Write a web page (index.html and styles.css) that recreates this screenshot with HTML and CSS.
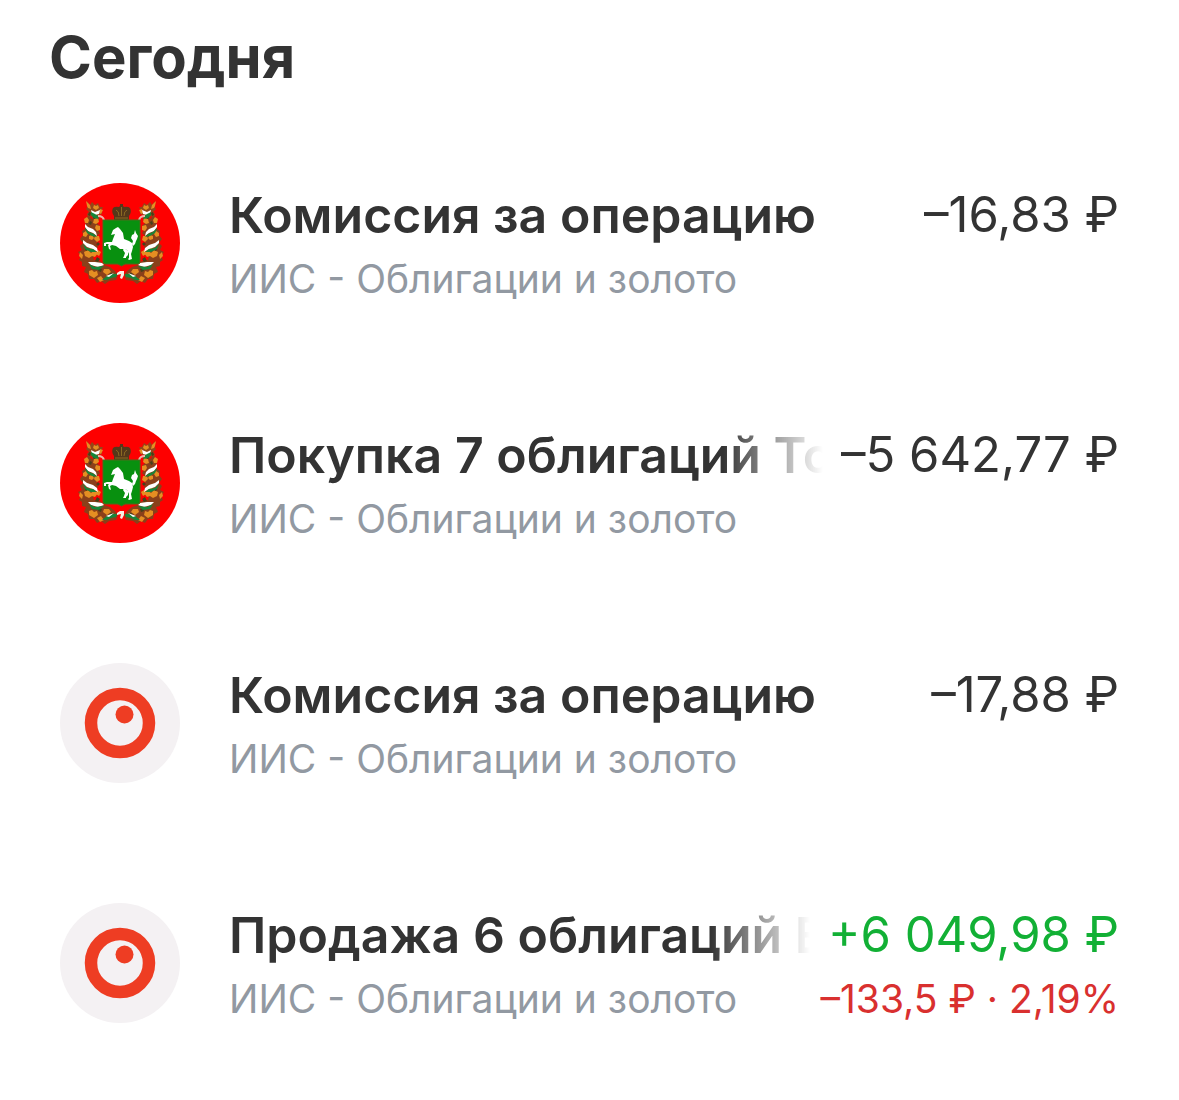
FILE: index.html
```html
<!DOCTYPE html>
<html lang="ru">
<head>
<title>Операции</title>
<meta charset="UTF-8">
<meta name="viewport" content="width=device-width, initial-scale=1.0">
<link rel="stylesheet" href="styles.css">
</head>

<body>

<!-- shared logos -->
<svg class="sprite" aria-hidden="true">
  <symbol id="tomsk" viewBox="0 0 120 120">
    <circle cx="60" cy="60" r="60" fill="#fe0000"/>
    <!-- left half of the wreath, mirrored below for the right half -->
    <g id="wreath">
      <path d="M27 18l3 4 2-3 3 3 3-2 2 4 3 0-2 4 1 3-4 1-1 4-4 0-2-3-3 2-1-4 2-2-3-3 2-3z" fill="#94461a"/>
      <path d="M26 35l3-2 3 3 4-2 3 3-2 3 3 3-2 4 2 3-3 3 2 4-3 3 2 4-3 4 2 4-4 2 1 3 6 1 4 4 6 2 5 4 3 4-2 5-7 1-4 3-4-3-4 2-3-4-5 0-1-5-4-2 2-5-4-1 0-4-3-2 2-4-3-4 4-2-2-4 3-3-3-4 3-4-1-4 3-2z" fill="#8a401a"/>
      <g fill="#e58e22">
        <path d="M26 18l4 4 1 4-3-1-1-2z"/>
        <path d="M34 22l2 1 2-1 1 3-3 2-3-2z"/>
        <path d="M40 26l3 1-2 4-2-1z"/>
        <path d="M24 36l3-2 2 3-1 3-3 0z"/>
        <path d="M34 36l4-1 1 4-3 2-3-1z"/>
        <path d="M23 50l3-2 2 3-2 3-3-1z"/>
        <path d="M36 42l4 1 0 4-3 1-2-3z"/>
        <path d="M29 53l3-1 2 3-2 2-3-1z"/>
        <path d="M35 53l4 0 1 4-3 2-3-3z"/>
        <path d="M24 69l4-2 3 3 4-3 3 3-3 4-3-1-3 2-4-2z"/>
        <path d="M20 69l3 3-1 4-3-3z"/>
        <path d="M29 64l4-1 1 3-3 2z"/>
        <path d="M38 67l3 2-2 4-3-2z"/>
        <path d="M29 88l3-1 2 2 3-1 1 4-4 3-5-3z"/>
        <path d="M44 86l5 0 2 3-4 3-4-3z"/>
        <path d="M37 95l4-2 3 4-4 2z"/>
      </g>
      <g fill="#45401a">
        <path d="M33 33l3 0-1 3-2-1z"/>
        <path d="M29 29l2 1-1 3-2-1z"/>
        <path d="M30 38l2 1-1 3-2-1z"/>
        <path d="M38 59l2 2-2 2-2-2z"/>
        <path d="M26 65l2 1-1 2-2-1z"/>
        <path d="M37 74l3 2-2 3-3-1z"/>
        <path d="M39 85l3 1-1 3-3-1z"/>
        <path d="M50 90l3 0-1 3-3 0z"/>
      </g>
      <!-- ribbon turns -->
      <path d="M31 27l4 2 5-2-1 4-4 1-3-1z" fill="#fff"/>
      <path d="M31 29l4 2 3 2 1 3-5-1-3-3z" fill="#16863a"/>
      <path d="M25 41l3 3 5 2 3 3 1 4-4-3-5-2-3-4z" fill="#fff"/>
      <path d="M25 45l4 4 5 2 3 3-5-1-5-3z" fill="#16863a"/>
      <path d="M23 57l4 3 6 2 4 3 1 4-5-3-6-2-4-4z" fill="#fff"/>
      <path d="M23 61l4 4 6 1 4 3-6 0-6-3z" fill="#16863a"/>
      <path d="M28 79l7 0 7 1 2 2-6 2-7-2z" fill="#fff"/>
      <path d="M29 81l6 3 9-1-5 4-7-1z" fill="#16863a"/>
      <path d="M42 97l5-4 6-2 4 0-1 3-5 1-4 2z" fill="#16863a"/>
      <path d="M46 93l8-3-5 4z" fill="#fff"/>
    </g>
    <use href="#wreath" transform="translate(122 0) scale(-1 1)"/>
    <!-- crown -->
    <path d="M53 25q2-2 6-1l1-1 0-2h3l0 2 1 1q4-1 6 1 2 4-1 8v4H54v-4q-3-4-1-8z" fill="#54381a"/>
    <path d="M56 27q3 1 3 6M67 27q-3 1-3 6M61.500 24v9M55 35h13" fill="none" stroke="#8a6a22"/>
    <path d="M44 37q-1-4-6-4M79 37q1-4 6-4" fill="none" stroke="#f0b5ab" stroke-width="2"/>
    <!-- shield -->
    <path d="M43 37h37v42q0 2-2 2H65l-3.500 2-3.500-2H45q-2 0-2-2z" fill="#08900f" stroke="#4b6c1c"/>
    <!-- horse -->
    <path d="M58 44l2 2 3 4 1 6 5 2 3 2 1 4-1 4-1 3 1 5-3 1-1-1 1-1 0-4-2-4-3-1-4 0-4-3-4-1-2 1 1 4-2-1-1-4 1-1-3 0 0 2-2 0 0-3 3-1 5 0 1-3 2-5-4 1 2-5 3-2z" fill="#fff"/>
    <path d="M64 65l4 3 0 4-2 2 0 1-3 0 1-2 1-3-2-3z" fill="#fff"/>
    <path d="M72 61l1-3-2-3 1-3 2-1 1-4 1 3 2 3-1 3-1 2-1 3-2 2z" fill="#fff"/>
    <!-- ribbon knot -->
    <path d="M57 90l3-2 4 0 0 4-2 4-2-1 1-4-4 1z" fill="#f6f1e5"/>
  </symbol>
  <symbol id="ring" viewBox="0 0 120 120">
    <circle cx="60" cy="60" r="60" fill="#f4f1f3"/>
    <circle cx="60" cy="60" r="29" fill="none" stroke="#ee3d23" stroke-width="12.500"/>
    <circle cx="64.500" cy="51.500" r="9" fill="#ee3d23"/>
  </symbol>
</svg>

<main class="feed">
  <h1 class="day">Сегодня</h1>

  <ul class="operations">
    <li class="operation">
      <svg class="logo" aria-hidden="true"><use href="#tomsk"/></svg>
      <div class="info">
        <div class="line">
          <span class="title">Комиссия за операцию</span>
          <span class="amount">–16,83 ₽</span>
        </div>
        <div class="line small">
          <span class="account">ИИС - Облигации и золото</span>
        </div>
      </div>
    </li>

    <li class="operation">
      <svg class="logo" aria-hidden="true"><use href="#tomsk"/></svg>
      <div class="info">
        <div class="line">
          <span class="title fade">Покупка 7 облигаций То</span>
          <span class="amount">–5 642,77 ₽</span>
        </div>
        <div class="line small">
          <span class="account">ИИС - Облигации и золото</span>
        </div>
      </div>
    </li>

    <li class="operation">
      <svg class="logo" aria-hidden="true"><use href="#ring"/></svg>
      <div class="info">
        <div class="line">
          <span class="title">Комиссия за операцию</span>
          <span class="amount">–17,88 ₽</span>
        </div>
        <div class="line small">
          <span class="account">ИИС - Облигации и золото</span>
        </div>
      </div>
    </li>

    <li class="operation">
      <svg class="logo" aria-hidden="true"><use href="#ring"/></svg>
      <div class="info">
        <div class="line">
          <span class="title fade">Продажа 6 облигаций Е</span>
          <span class="amount plus">+6 049,98 ₽</span>
        </div>
        <div class="line small">
          <span class="account">ИИС - Облигации и золото</span>
          <span class="result">–133,5 ₽ · 2,19%</span>
        </div>
      </div>
    </li>
  </ul>
</main>

</body>
</html>
```

FILE: styles.css
```css
body {
  margin: 0;
  background: #fff;
  color: #333;
  font-family: Inter, "Liberation Sans", sans-serif;
}

.sprite {
  position: absolute;
  width: 0;
  height: 0;
}

.feed {
  padding: 19px 60px 60px;
}

.day {
  margin: 0 -11px;
  font-size: 58px;
  line-height: 76px;
  font-weight: 700;
}

.operations {
  margin: 0;
  padding: 88px 0 0;
  list-style: none;
  display: grid;
  grid-template-columns: minmax(0, 1fr);
  gap: 112px;
}

.operation {
  display: flex;
  gap: 49px;
}

.logo {
  flex: none;
  width: 120px;
  height: 120px;
}

.info {
  flex: 1;
  min-width: 0; /* lets long titles shrink */
}

.line {
  display: flex;
  justify-content: space-between;
  gap: 18px;
  line-height: 64px;
  white-space: nowrap;
}

.small {
  font-size: 39px;
}

.title {
  min-width: 0;
  overflow: hidden;
  font-size: 50px;
  font-weight: 600;
}

/* long names dissolve before the amount */
.fade {
  -webkit-mask-image: linear-gradient(to left, transparent, #000 100px);
  mask-image: linear-gradient(to left, transparent, #000 100px);
}

.amount {
  font-size: 49px;
}

.account {
  color: #9299a2;
}

.plus {
  color: #12b035;
}

.result {
  color: #d9302f;
}
```
